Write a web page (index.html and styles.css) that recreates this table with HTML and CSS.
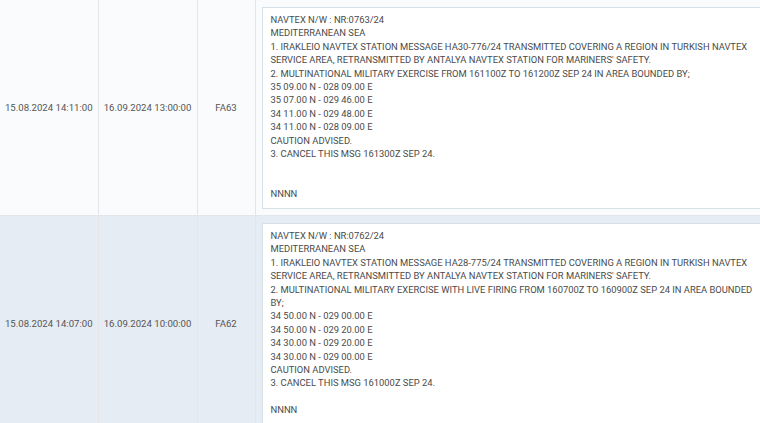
FILE: index.html
```html
<!DOCTYPE html>
<html lang="en">
<head>
    <meta charset="UTF-8">
    <meta name="viewport" content="width=device-width, initial-scale=1.0">
    <title>Navtex Messages</title>
    <link rel="stylesheet" href="styles.css">
</head>
<body>
    <table class="grid">
        <colgroup>
            <col class="col-date">
            <col class="col-date2">
            <col class="col-code">
            <col class="col-msg">
        </colgroup>
        <tbody>
            <tr class="row">
                <td>15.08.2024 14:11:00</td>
                <td>16.09.2024 13:00:00</td>
                <td>FA63</td>
                <td class="msg-cell">
                    <div class="msg">NAVTEX N/W : NR:0763/24
MEDITERRANEAN SEA
1. IRAKLEIO NAVTEX STATION MESSAGE HA30-776/24 TRANSMITTED COVERING A REGION IN TURKISH NAVTEX SERVICE AREA, RETRANSMITTED BY ANTALYA NAVTEX STATION FOR MARINERS' SAFETY.
2. MULTINATIONAL MILITARY EXERCISE FROM 161100Z TO 161200Z SEP 24 IN AREA BOUNDED BY;
35 09.00 N - 028 09.00 E
35 07.00 N - 029 46.00 E
34 11.00 N - 029 48.00 E
34 11.00 N - 028 09.00 E
CAUTION ADVISED.
3. CANCEL THIS MSG 161300Z SEP 24.


NNNN</div>
                </td>
            </tr>
            <tr class="row row-alt">
                <td>15.08.2024 14:07:00</td>
                <td>16.09.2024 10:00:00</td>
                <td>FA62</td>
                <td class="msg-cell">
                    <div class="msg">NAVTEX N/W : NR:0762/24
MEDITERRANEAN SEA
1. IRAKLEIO NAVTEX STATION MESSAGE HA28-775/24 TRANSMITTED COVERING A REGION IN TURKISH NAVTEX SERVICE AREA, RETRANSMITTED BY ANTALYA NAVTEX STATION FOR MARINERS' SAFETY.
2. MULTINATIONAL MILITARY EXERCISE WITH LIVE FIRING FROM 160700Z TO 160900Z SEP 24 IN AREA BOUNDED BY;
34 50.00 N - 029 00.00 E
34 50.00 N - 029 20.00 E
34 30.00 N - 029 20.00 E
34 30.00 N - 029 00.00 E
CAUTION ADVISED.
3. CANCEL THIS MSG 161000Z SEP 24.

NNNN</div>
                </td>
            </tr>
        </tbody>
    </table>
</body>
</html>
```

FILE: styles.css
```css
/* Navtex grid */
body {
    margin: 0;
    background: #fafbfc;
    font-family: Roboto, "Liberation Sans", Arial, sans-serif;
    color: #555;
    overflow: hidden;
}

.grid {
    table-layout: fixed;
    width: 760px;
    border-collapse: collapse;
}

.col-date { width: 98px; }
.col-date2 { width: 99px; }
.col-code { width: 58px; }

.grid td {
    border-right: 1px solid #e3e5e8;
    border-bottom: 1px solid #e1e6ea;
    text-align: center;
    vertical-align: middle;
    font-size: 9.6px;
    padding: 0;
}

.row {
    background: #fafbfc;
}

.row-alt {
    background: #e6ecf3;
}

.grid td.msg-cell {
    text-align: left;
    padding: 7px 0 6px 6px;
    border-right: none;
    overflow: hidden;
}

.msg {
    width: 492px;
    height: 188px;
    padding: 5px 10px 7px 8px;
    background: #fff;
    border: 1px solid #d5e1e6;
    white-space: pre-wrap;
    font-size: 9.4px;
    line-height: 13.4px;
    color: #4a4a4a;
}
```
